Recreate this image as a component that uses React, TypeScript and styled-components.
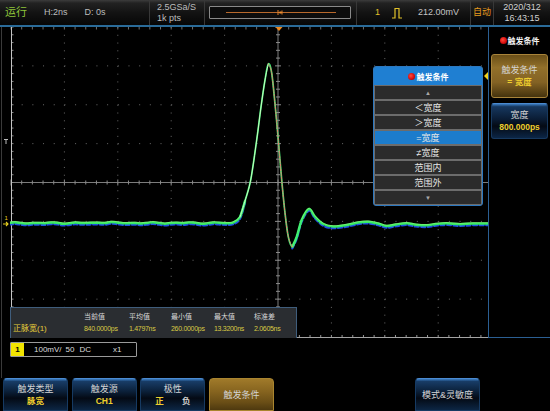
import React from "react";
import styled, { createGlobalStyle, css } from "styled-components";

const FONT = `"Liberation Sans", "Noto Sans CJK SC", sans-serif`;

const GlobalStyle = createGlobalStyle`
  html, body { margin: 0; padding: 0; background: #000; }
  body { font-family: ${FONT}; }
  #root { width: 550px; height: 411px; }
`;

/* ---------- layout ---------- */
const Screen = styled.div`
  width: 550px;
  height: 411px;
  background: #000;
  display: flex;
  flex-direction: column;
  overflow: hidden;
  font-family: ${FONT};
  color: #c8c8c8;
`;

/* ---------- top bar ---------- */
const TopBar = styled.header`
  height: 25px;
  flex: none;
  display: flex;
  border-bottom: 2px solid #2a6b99;
  background: linear-gradient(180deg, #3c3c3c 0, #222 3px, #131313 50%, #060606 100%);
  font-size: 9px;
  color: #bdbdbd;
`;

const Seg = styled.div<{ $w: number; $sep?: boolean; $col?: boolean; $pl?: number; $gap?: number; $center?: boolean }>`
  width: ${(p) => p.$w}px;
  flex: none;
  height: 100%;
  box-sizing: border-box;
  display: flex;
  flex-direction: ${(p) => (p.$col ? "column" : "row")};
  align-items: ${(p) => (p.$col ? (p.$center ? "center" : "flex-start") : "center")};
  justify-content: ${(p) => (p.$col ? "center" : "flex-start")};
  padding-left: ${(p) => p.$pl ?? 0}px;
  gap: ${(p) => p.$gap ?? 0}px;
  line-height: 11px;
  ${(p) => p.$sep && "border-left: 1px solid #383838;"}
`;

const RunText = styled.span`
  color: #8dc43a;
  font-size: 11px;
`;

const HdrText = styled.span<{ $color?: string; $ml?: number }>`
  color: ${(p) => p.$color ?? "#bdbdbd"};
  margin-left: ${(p) => p.$ml ?? 0}px;
  white-space: nowrap;
`;

const TimeBox = styled.div`
  margin-left: 4px;
  width: 142px;
  height: 13px;
  box-sizing: border-box;
  border: 1px solid #8a8a8a;
  border-radius: 1px;
  background: #0c0c0c;
  display: flex;
`;

/* ---------- main area ---------- */
const Main = styled.div`
  height: 311px;
  flex: none;
  display: flex;
`;

const LeftStrip = styled.div`
  width: 10px;
  flex: none;
  box-shadow: inset 1px 0 0 #000, inset 2px 0 0 #3a3a3a;
`;

const Scope = styled.div`
  width: 478px;
  flex: none;
  position: relative;
  overflow: hidden;
`;

const RightPanel = styled.aside`
  width: 62px;
  flex: none;
  box-sizing: border-box;
  border-left: 1px solid #2b5f93;
  border-bottom: 1px solid #2b5f93;
  position: relative;
  display: flex;
  flex-direction: column;
  align-items: center;
  padding-top: 6px;
`;

const PanelTitle = styled.div`
  height: 15px;
  display: flex;
  align-items: center;
  gap: 1px;
  font-size: 8px;
  font-weight: bold;
  color: #f2f2f2;
`;

const RedDot = styled.span<{ $size: number }>`
  width: ${(p) => p.$size}px;
  height: ${(p) => p.$size}px;
  border-radius: 50%;
  background: radial-gradient(circle at 40% 40%, #ff4a3a 0, #d80f0f 55%, #8a0000 100%);
  display: inline-block;
  flex: none;
`;

const SideKey = styled.div<{ $gold?: boolean; $h: number; $mt: number }>`
  width: 57px;
  height: ${(p) => p.$h}px;
  margin-top: ${(p) => p.$mt}px;
  box-sizing: border-box;
  border-radius: 3px;
  display: flex;
  flex-direction: column;
  align-items: center;
  justify-content: center;
  line-height: 12px;
  font-size: 8px;
  ${(p) =>
    p.$gold
      ? css`
          background: linear-gradient(180deg, #6a4f18 0%, #92702a 30%, #836224 65%, #45330e 100%);
          border: 1px solid #a8843a;
        `
      : css`
          background: linear-gradient(180deg, #3a7bc0 0%, #16375e 8%, #0a1c34 45%, #040a14 65%, #0c2646 100%);
          border: 1px solid #17395f;
          border-top-color: #4a8ad0;
        `}
`;

const KeyLabel = styled.span`
  color: #d4d4d4;
  font-size: 9px;
  white-space: nowrap;
`;

const KeyValue = styled.span`
  color: #f0cf2e;
  font-size: 8.5px;
  font-weight: bold;
  white-space: nowrap;
`;

const Pointer = styled.div`
  position: absolute;
  left: -5px;
  top: 45px;
  width: 0;
  height: 0;
  border-top: 4px solid transparent;
  border-bottom: 4px solid transparent;
  border-right: 4px solid #f2d21e;
`;

/* ---------- popup menu ---------- */
const Menu = styled.div`
  position: absolute;
  left: 363px;
  top: 39px;
  width: 110px;
  height: 140px;
  box-sizing: border-box;
  border: 1px solid #2c78c0;
  border-radius: 3px;
  background: #6c6c6c;
  display: flex;
  flex-direction: column;
  overflow: hidden;
`;

const MenuHead = styled.div`
  height: 18px;
  flex: none;
  background: #1f7fd2;
  display: flex;
  align-items: center;
  justify-content: center;
  gap: 2px;
  font-size: 8px;
  font-weight: bold;
  color: #fff;
`;

const MenuList = styled.div`
  flex: 1;
  display: flex;
  flex-direction: column;
  gap: 2px;
  padding: 1px;
`;

const MenuItem = styled.div<{ $active?: boolean; $arrow?: boolean }>`
  flex: 1;
  display: flex;
  align-items: center;
  justify-content: center;
  background: ${(p) => (p.$active ? "#1c7ccc" : "#2b2b2b")};
  color: ${(p) => (p.$arrow ? "#a8a8a8" : "#e6e6e6")};
  font-size: ${(p) => (p.$arrow ? "6px" : "9px")};
  white-space: nowrap;
`;

/* ---------- measurement ---------- */
const MeasPanel = styled.div`
  position: absolute;
  left: 0;
  top: 280px;
  width: 287px;
  height: 31px;
  box-sizing: border-box;
  background: #2a2d31;
  border: 1px solid #3f5d7c;
  border-bottom: none;
  display: grid;
  grid-template-columns: 71px 45px 42px 43px 40px 1fr;
  grid-template-rows: 12px 12px;
  padding: 3px 0 0 2px;
  font-size: 7px;
  line-height: 12px;
  letter-spacing: -0.3px;
`;

const MeasHead = styled.span`
  color: #d8d8d8;
  letter-spacing: 0;
`;

const MeasVal = styled.span`
  color: #d8ca44;
  white-space: nowrap;
`;

const MeasLabel = styled.span`
  color: #e6cc3a;
  font-size: 8px;
  letter-spacing: 0;
  white-space: nowrap;
`;

/* ---------- lower area ---------- */
const Lower = styled.div`
  height: 40px;
  flex: none;
  padding: 4px 0 0 10px;
  box-sizing: border-box;
  box-shadow: inset 1px 0 0 #000, inset 2px 0 0 #3a3a3a;
`;

const ChannelBar = styled.div`
  display: flex;
  align-items: center;
  width: 127px;
  height: 15px;
  box-sizing: border-box;
  border: 1px solid #9a9a9a;
  border-radius: 1px;
  font-size: 8px;
  color: #dcdcdc;
`;

const ChBadge = styled.span`
  width: 13px;
  height: 100%;
  background: #f2e400;
  color: #000;
  font-weight: bold;
  display: flex;
  align-items: center;
  justify-content: center;
  font-size: 8px;
`;

const ChText = styled.span<{ $ml: number }>`
  margin-left: ${(p) => p.$ml}px;
  white-space: nowrap;
`;

const KeyRow = styled.nav`
  height: 33px;
  flex: none;
  display: grid;
  grid-template-columns: repeat(8, 65px);
  column-gap: 3.7px;
  padding-left: 3px;
`;

const SoftKey = styled.div<{ $gold?: boolean }>`
  height: 33px;
  box-sizing: border-box;
  border-radius: 4px 4px 0 0;
  display: flex;
  flex-direction: column;
  align-items: center;
  justify-content: center;
  line-height: 12px;
  ${(p) =>
    p.$gold
      ? css`
          background: linear-gradient(180deg, #a07a2a 0%, #86641f 40%, #6a4e16 75%, #4e390f 100%);
          border: 1px solid #a9852f;
        `
      : css`
          background: linear-gradient(180deg, #3b7dc2 0%, #183c66 8%, #0b2039 40%, #040a14 62%, #0c2644 100%);
          border: 1px solid #163a62;
          border-top-color: #4b8bd2;
        `}
`;

const PolarRow = styled.div`
  display: flex;
  gap: 18px;
  font-size: 8.5px;
  font-weight: bold;
`;

const PolarOpt = styled.span<{ $on?: boolean }>`
  color: ${(p) => (p.$on ? "#f0cf2e" : "#cfcfcf")};
`;

/* ---------- drawings ---------- */
type Pt = [number, number];

function smooth(pts: Pt[]): string {
  let d = `M${pts[0][0]},${pts[0][1]}`;
  for (let i = 0; i < pts.length - 1; i++) {
    const p0 = pts[i - 1] || pts[i];
    const p1 = pts[i];
    const p2 = pts[i + 1];
    const p3 = pts[i + 2] || p2;
    const c1x = p1[0] + (p2[0] - p0[0]) / 6;
    const c1y = p1[1] + (p2[1] - p0[1]) / 6;
    const c2x = p2[0] - (p3[0] - p1[0]) / 6;
    const c2y = p2[1] - (p3[1] - p1[1]) / 6;
    d += ` C${c1x.toFixed(2)},${c1y.toFixed(2)} ${c2x.toFixed(2)},${c2y.toFixed(2)} ${p2[0].toFixed(2)},${p2[1].toFixed(2)}`;
  }
  return d;
}

const baseLeft: Pt[] = [];
for (let x = 9; x < 226; x += 6) {
  const n = 0.45 * Math.sin(x * 0.73) + 0.35 * Math.sin(x * 1.91 + 1.2) + (x > 95 && x < 112 ? -0.6 : 0);
  baseLeft.push([x, 223 + n]);
}

const pulse: Pt[] = [
  [226, 223.2], [233, 222.6], [240, 217], [245, 201], [250.7, 180], [256.7, 140], [261, 107],
  [265, 80], [268.3, 64], [271.7, 73], [275.3, 107], [278.3, 140], [281.7, 180], [285, 213],
  [288.3, 236.7], [292.3, 246.7], [296.7, 237], [301.7, 220], [309, 209], [315, 216.7],
  [323.3, 224], [333.3, 226.5], [346.7, 225], [358, 222.5], [368.3, 221.7], [378, 223.5],
  [386.7, 226], [396, 224.5], [406.7, 223.3], [416, 224.8], [426.7, 225.3], [436, 224],
  [446.7, 223.3], [460, 224.2], [473, 223.5], [490, 223.5],
];

const all: Pt[] = [...baseLeft, ...pulse];
const seg = (a: number, b: number) => smooth(all.filter((p) => p[0] >= a && p[0] <= b));
const basePath = seg(0, 245);
const tailPath = seg(292, 600);
const pulsePath = seg(240, 302);
const risePath = seg(240, 268.3);
const fallPath = seg(268.3, 292.3);

const X0 = 11;
const DX = 53.4;
const Y0 = 27;
const DY = 38.875;
const YB = Y0 + 8 * DY;

const GridLines: React.FC = () => {
  const els: React.ReactNode[] = [];
  for (let i = 1; i < 10; i++) {
    if (i === 5) continue;
    const x = X0 + i * DX;
    els.push(
      <line key={`v${i}`} x1={x} y1={Y0} x2={x} y2={YB} stroke="#6a6a6a" strokeWidth={1} strokeDasharray={`1 ${DY / 5 - 1}`} />
    );
  }
  for (let j = 1; j < 8; j++) {
    if (j === 4) continue;
    const y = Y0 + j * DY;
    els.push(
      <line key={`h${j}`} x1={X0} y1={y} x2={X0 + 10 * DX} y2={y} stroke="#6a6a6a" strokeWidth={1} strokeDasharray={`1 ${DX / 5 - 1}`} />
    );
  }
  const yc = Y0 + 4 * DY;
  const xc = X0 + 5 * DX;
  els.push(<line key="hc" x1={X0} y1={yc} x2={X0 + 10 * DX} y2={yc} stroke="#7c7c7c" strokeWidth={1} />);
  els.push(<line key="vc" x1={xc} y1={Y0} x2={xc} y2={YB} stroke="#7c7c7c" strokeWidth={1} />);
  for (let k = 0; k <= 50; k++) {
    const x = X0 + (k * DX) / 5;
    const big = k % 5 === 0 ? 3 : 2;
    els.push(<line key={`th${k}`} x1={x} y1={yc - big} x2={x} y2={yc + big} stroke="#8a8a8a" strokeWidth={1} />);
    els.push(<line key={`tt${k}`} x1={x} y1={Y0} x2={x} y2={Y0 + 2.5} stroke="#6e6e6e" strokeWidth={1} />);
    els.push(<line key={`tb${k}`} x1={x} y1={YB - 3} x2={x} y2={YB} stroke="#9a9a9a" strokeWidth={1} />);
  }
  for (let k = 0; k <= 40; k++) {
    const y = Y0 + (k * DY) / 5;
    const big = k % 5 === 0 ? 3 : 2;
    els.push(<line key={`tv${k}`} x1={xc - big} y1={y} x2={xc + big} y2={y} stroke="#8a8a8a" strokeWidth={1} />);
    els.push(<line key={`tl${k}`} x1={X0} y1={y} x2={X0 + 2.5} y2={y} stroke="#8a8a8a" strokeWidth={1} />);
  }
  els.push(<line key="lb" x1={X0 + 0.5} y1={Y0} x2={X0 + 0.5} y2={YB} stroke="#c4c4c4" strokeWidth={1} />);
  els.push(<line key="bb" x1={X0} y1={YB - 0.5} x2={X0 + 10 * DX} y2={YB - 0.5} stroke="#a4a4a4" strokeWidth={1} />);
  return <>{els}</>;
};

const ScopeDrawing: React.FC = () => (
  <svg width={478} height={311} viewBox="10 27 478 311" style={{ display: "block" }}>
    <GridLines />
    <polygon points="275.5,27 282.5,27 279,31" fill="#f08a1e" />
    <g fill="none" strokeLinejoin="round" strokeLinecap="round">
      <path d={basePath} stroke="#1f4fe0" strokeWidth={2.2} strokeDasharray="4 2.5" transform="translate(0 1.7)" />
      <path d={tailPath} stroke="#1f4fe0" strokeWidth={2.2} strokeDasharray="4 2.5" transform="translate(0 1.7)" />
      <path d={basePath} stroke="#34ea62" strokeWidth={2.5} />
      <path d={tailPath} stroke="#34ea62" strokeWidth={2.5} />
      <path d={basePath} stroke="#c0ff8c" strokeWidth={0.7} transform="translate(0 -0.8)" opacity={0.6} />
      <path d={tailPath} stroke="#c0ff8c" strokeWidth={0.7} transform="translate(0 -0.8)" opacity={0.6} />
      <path d={pulsePath} stroke="#3cee74" strokeWidth={1.7} />
      <path d={risePath} stroke="#f2ffd6" strokeWidth={0.9} opacity={0.85} />
      <path d={fallPath} stroke="#ff6b6b" strokeWidth={1} strokeDasharray="1.2 1.4" />
    </g>
  </svg>
);

const LeftMarkers: React.FC = () => (
  <svg width={10} height={311} viewBox="0 27 10 311" style={{ display: "block" }}>
    <path d="M4 139.5 H8 M6 139.5 V144" stroke="#bdbdbd" strokeWidth={1} fill="none" />
    <text x={4.5} y={220} fontSize={6} fill="#e8d020" fontFamily="Liberation Sans, sans-serif">1</text>
    <path d="M3 224 H8 M6 222 L8 224 L6 226" stroke="#e8d020" strokeWidth={1.1} fill="none" />
  </svg>
);

const PulseIcon: React.FC = () => (
  <svg width={10} height={12} viewBox="0 0 10 12">
    <path d="M0 11 H3 V1.5 H7 V11 H10" stroke="#e2c22a" strokeWidth={1.2} fill="none" />
  </svg>
);

const TimeBar: React.FC = () => (
  <svg width={140} height={11} viewBox="0 0 140 11">
    <line x1={16} y1={5.5} x2={126} y2={5.5} stroke="#b8692c" strokeWidth={1} />
    <path d="M68 3 V8 M68 5.5 H72 M72 3.5 V7.5" stroke="#e0802a" strokeWidth={1} fill="none" />
    <rect x={69.5} y={4.5} width={2} height={2} fill="#f09030" />
  </svg>
);

/* ---------- app ---------- */
export default function App() {
  return (
    <>
      <GlobalStyle />
      <Screen>
        <TopBar>
          <Seg $w={149} $pl={5} $gap={17}>
            <RunText>运行</RunText>
            <HdrText>H:2ns</HdrText>
            <HdrText>D: 0s</HdrText>
          </Seg>
          <Seg $w={55} $sep $col $pl={7}>
            <HdrText>2.5GSa/S</HdrText>
            <HdrText>1k pts</HdrText>
          </Seg>
          <Seg $w={152} $sep>
            <TimeBox>
              <TimeBar />
            </TimeBox>
          </Seg>
          <Seg $w={114} $sep $pl={18} $gap={12}>
            <HdrText $color="#e2c22a">1</HdrText>
            <PulseIcon />
            <HdrText $color="#c4c4c4" $ml={4}>212.00mV</HdrText>
          </Seg>
          <Seg $w={23} $sep $pl={2}>
            <HdrText $color="#e69a1e">自动</HdrText>
          </Seg>
          <Seg $w={57} $sep $col $center>
            <HdrText $color="#d0d0d0">2020/312</HdrText>
            <HdrText $color="#d0d0d0">16:43:15</HdrText>
          </Seg>
        </TopBar>

        <Main>
          <LeftStrip>
            <LeftMarkers />
          </LeftStrip>
          <Scope>
            <ScopeDrawing />
            <MeasPanel>
              <span />
              <MeasHead>当前值</MeasHead>
              <MeasHead>平均值</MeasHead>
              <MeasHead>最小值</MeasHead>
              <MeasHead>最大值</MeasHead>
              <MeasHead>标准差</MeasHead>
              <MeasLabel>正脉宽(1)</MeasLabel>
              <MeasVal>840.0000ps</MeasVal>
              <MeasVal>1.4797ns</MeasVal>
              <MeasVal>260.0000ps</MeasVal>
              <MeasVal>13.3200ns</MeasVal>
              <MeasVal>2.0605ns</MeasVal>
            </MeasPanel>
            <Menu>
              <MenuHead>
                <RedDot $size={7} />
                触发条件
              </MenuHead>
              <MenuList>
                <MenuItem $arrow>▲</MenuItem>
                <MenuItem>＜宽度</MenuItem>
                <MenuItem>＞宽度</MenuItem>
                <MenuItem $active>=宽度</MenuItem>
                <MenuItem>≠宽度</MenuItem>
                <MenuItem>范围内</MenuItem>
                <MenuItem>范围外</MenuItem>
                <MenuItem $arrow>▼</MenuItem>
              </MenuList>
            </Menu>
          </Scope>
          <RightPanel>
            <Pointer />
            <PanelTitle>
              <RedDot $size={7} />
              触发条件
            </PanelTitle>
            <SideKey $gold $h={44} $mt={6}>
              <KeyLabel>触发条件</KeyLabel>
              <KeyValue>= 宽度</KeyValue>
            </SideKey>
            <SideKey $h={36} $mt={5}>
              <KeyLabel>宽度</KeyLabel>
              <KeyValue>800.000ps</KeyValue>
            </SideKey>
          </RightPanel>
        </Main>

        <Lower>
          <ChannelBar>
            <ChBadge>1</ChBadge>
            <ChText $ml={10}>100mV/</ChText>
            <ChText $ml={4}>50</ChText>
            <ChText $ml={5}>DC</ChText>
            <ChText $ml={22}>x1</ChText>
          </ChannelBar>
        </Lower>

        <KeyRow>
          <SoftKey>
            <KeyLabel>触发类型</KeyLabel>
            <KeyValue>脉宽</KeyValue>
          </SoftKey>
          <SoftKey>
            <KeyLabel>触发源</KeyLabel>
            <KeyValue>CH1</KeyValue>
          </SoftKey>
          <SoftKey>
            <KeyLabel>极性</KeyLabel>
            <PolarRow>
              <PolarOpt $on>正</PolarOpt>
              <PolarOpt>负</PolarOpt>
            </PolarRow>
          </SoftKey>
          <SoftKey $gold>
            <KeyLabel>触发条件</KeyLabel>
          </SoftKey>
          <div />
          <div />
          <SoftKey>
            <KeyLabel>模式&amp;灵敏度</KeyLabel>
          </SoftKey>
          <div />
        </KeyRow>
      </Screen>
    </>
  );
}
